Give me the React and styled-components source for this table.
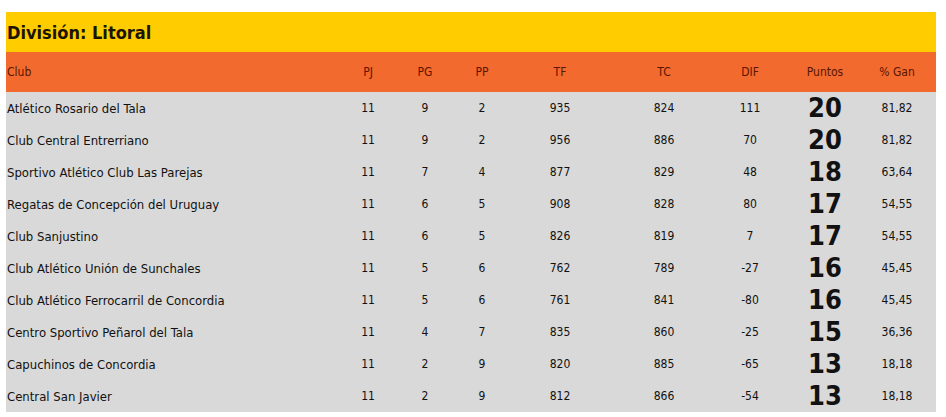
import React from "react";
import styled, { createGlobalStyle } from "styled-components";

const Global = createGlobalStyle`
  html, body { margin: 0; padding: 0; background: #fff; }
  body { font-family: Tahoma, "DejaVu Sans Condensed", "DejaVu Sans", sans-serif; }
`;

const Page = styled.div`
  padding: 12px 10px 0 6px;
`;

const Title = styled.h2`
  margin: 0;
  height: 40px;
  background: #ffcc00;
  color: #1a1400;
  font-size: 18px;
  font-weight: bold;
  line-height: 42px;
  padding-left: 1px;
`;

const Table = styled.table`
  width: 100%;
  border-collapse: collapse;
  table-layout: fixed;
  font-size: 12px;
`;

const HeadRow = styled.tr`
  background: #f26a2e;
  height: 40px;
`;

const Th = styled.th`
  font-weight: normal;
  color: #5a1500;
  padding: 0;
  text-align: ${(p) => (p.$left ? "left" : "center")};
  padding-left: ${(p) => (p.$left ? "1px" : "0")};
`;

const Row = styled.tr`
  background: #d9d9d9;
  height: 32px;
`;

const Td = styled.td`
  padding: 0;
  color: #111;
  text-align: center;
`;

const ClubCell = styled.td`
  padding: 0 0 0 1px;
  color: #111;
  text-align: left;
  font-size: 13px;
`;

const Points = styled.td`
  padding: 0;
  text-align: center;
  font-size: 27px;
  font-weight: bold;
  color: #111;
  line-height: 32px;
`;

const cols = [344, 36, 78, 36, 120, 88, 84, 66, 78];

const rows = [
  ["Atlético Rosario del Tala", 11, 9, 2, 935, 824, 111, 20, "81,82"],
  ["Club Central Entrerriano", 11, 9, 2, 956, 886, 70, 20, "81,82"],
  ["Sportivo Atlético Club Las Parejas", 11, 7, 4, 877, 829, 48, 18, "63,64"],
  ["Regatas de Concepción del Uruguay", 11, 6, 5, 908, 828, 80, 17, "54,55"],
  ["Club Sanjustino", 11, 6, 5, 826, 819, 7, 17, "54,55"],
  ["Club Atlético Unión de Sunchales", 11, 5, 6, 762, 789, -27, 16, "45,45"],
  ["Club Atlético Ferrocarril de Concordia", 11, 5, 6, 761, 841, -80, 16, "45,45"],
  ["Centro Sportivo Peñarol del Tala", 11, 4, 7, 835, 860, -25, 15, "36,36"],
  ["Capuchinos de Concordia", 11, 2, 9, 820, 885, -65, 13, "18,18"],
  ["Central San Javier", 11, 2, 9, 812, 866, -54, 13, "18,18"],
];

const heads = ["Club", "PJ", "PG", "PP", "TF", "TC", "DIF", "Puntos", "% Gan"];

export default function App() {
  return (
    <>
      <Global />
      <Page>
        <Title>División: Litoral</Title>
        <Table>
          <colgroup>
            {cols.map((w, i) => (
              <col key={i} style={{ width: w }} />
            ))}
          </colgroup>
          <thead>
            <HeadRow>
              {heads.map((h, i) => (
                <Th key={h} $left={i === 0}>{h}</Th>
              ))}
            </HeadRow>
          </thead>
          <tbody>
            {rows.map((r) => (
              <Row key={r[0]}>
                {r.map((c, i) =>
                  i === 0 ? (
                    <ClubCell key={i}>{c}</ClubCell>
                  ) : i === 7 ? (
                    <Points key={i}>{c}</Points>
                  ) : (
                    <Td key={i}>{c}</Td>
                  )
                )}
              </Row>
            ))}
          </tbody>
        </Table>
      </Page>
    </>
  );
}
